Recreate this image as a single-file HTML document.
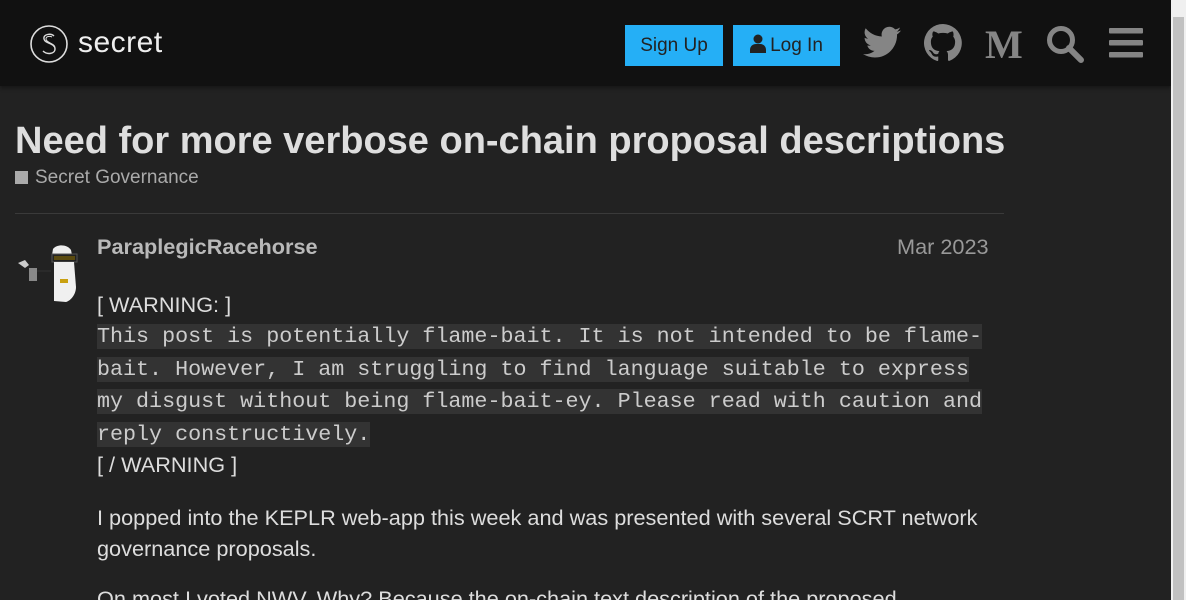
<!DOCTYPE html>
<html><head><meta charset="utf-8"><style>
*{margin:0;padding:0;box-sizing:border-box}
html,body{width:1186px;height:600px;overflow:hidden}
body{background:#222;font-family:"Liberation Sans",sans-serif;color:#ddd;position:relative}
.hdr{position:absolute;left:0;top:0;width:1171px;height:86px;background:#111;box-shadow:0 2px 4px rgba(0,0,0,.4)}
.sb{position:absolute;left:1171px;top:0;width:15px;height:600px;background:#f0f0f0}
.sb .th{position:absolute;left:2px;top:17px;width:11px;height:583px;background:#c1c1c1}
.btn{position:absolute;top:25px;height:41px;background:#25aff6;color:#222;font-size:19px;line-height:41px;text-align:center}
.ic{position:absolute;fill:#858585}
h1{position:absolute;left:15px;top:120px;font-size:38px;font-weight:bold;color:#dedede;white-space:nowrap}
.cat{position:absolute;left:15px;top:167px;font-size:19px;color:#aaa}
.cat i{display:inline-block;width:13px;height:13px;background:#aaa;margin-right:7px;vertical-align:-1px}
.hr{position:absolute;left:15px;top:213px;width:989px;height:1px;background:#3a3a3a}
.un{position:absolute;left:97px;top:234px;font-size:21.7px;font-weight:bold;color:#b9b9b9}
.dt{position:absolute;left:897px;top:234px;font-size:21.7px;color:#999}
.p{position:absolute;left:97px;font-size:21.7px;color:#ddd;line-height:31px;width:900px}
.mono{position:absolute;left:97px;top:321px;width:900px;font-family:"Liberation Mono",monospace;font-size:21.7px;line-height:32.7px;color:#ccc}
.mono span{background:#333}
</style></head><body>
<div class="hdr">
<svg style="position:absolute;left:29px;top:24px" width="40" height="40" viewBox="0 0 40 40"><circle cx="20" cy="20" r="18" fill="none" stroke="#ddd" stroke-width="1.6"/><path d="M25 12c-3-3-11-2-10 3 1 5 11 4 11 10 0 5-8 6-12 2" fill="none" stroke="#ddd" stroke-width="1.4"/><path d="M23 13c-2-1-6-1-6 2 0 4 9 4 9 9" fill="none" stroke="#ddd" stroke-width="1"/></svg>
<div style="position:absolute;left:78px;top:26px;font-size:30px;color:#eee;letter-spacing:0.5px">secret</div>
<div class="btn" style="left:625px;width:98px">Sign Up</div>
<div class="btn" style="left:733px;width:107px"><svg width="16" height="19" viewBox="0 0 16 19" style="vertical-align:-2px;margin-right:4px"><circle cx="8" cy="5" r="4.5" fill="#222"/><path d="M0 19v-3c0-4 3-6 6-6h4c3 0 6 2 6 6v3z" fill="#222"/></svg>Log In</div>
<svg class="ic" style="left:863px;top:26px" width="38" height="33" viewBox="0 0 24 20"><path d="M24 2.4c-.9.4-1.8.6-2.8.8 1-.6 1.8-1.6 2.2-2.7-1 .6-2 1-3.1 1.2A4.9 4.9 0 0 0 11.9 6.2 14 14 0 0 1 1.7 1a4.9 4.9 0 0 0 1.5 6.6c-.8 0-1.6-.3-2.2-.6 0 2.4 1.7 4.4 3.9 4.8-.7.2-1.5.2-2.2.1.6 2 2.4 3.4 4.6 3.4A9.9 9.9 0 0 1 0 17.3 14 14 0 0 0 7.5 19.5c9 0 14-7.5 14-14v-.6c1-.7 1.8-1.6 2.5-2.5z"/></svg>
<svg class="ic" style="left:924px;top:24px" width="38" height="38" viewBox="0 0 16 16"><path d="M8 0a8 8 0 0 0-2.5 15.6c.4 0 .5-.2.5-.4v-1.5c-2.2.5-2.7-1-2.7-1-.4-.9-.9-1.2-.9-1.2-.7-.5.1-.5.1-.5.8.1 1.2.8 1.2.8.7 1.3 1.9.9 2.3.7.1-.5.3-.9.5-1.1-1.8-.2-3.6-.9-3.6-4 0-.9.3-1.6.8-2.1-.1-.2-.4-1 .1-2.1 0 0 .7-.2 2.2.8a7.600 7.600 0 0 1 4 0c1.5-1 2.2-.8 2.2-.8.4 1.100.2 1.900.1 2.100.5.600.8 1.300.8 2.100 0 3.100-1.900 3.800-3.600 4 .3.3.6.8.6 1.500v2.200c0 .2.100.5.600.4A8 8 0 0 0 8 0z"/></svg>
<div style="position:absolute;left:985px;top:21px;font-family:'Liberation Serif',serif;font-weight:bold;font-size:40px;color:#858585">M</div>
<svg class="ic" style="left:1045px;top:24px" width="40" height="40" viewBox="0 0 40 40"><circle cx="16" cy="16" r="11.5" fill="none" stroke="#858585" stroke-width="5"/><path d="M24 24l12 12" stroke="#858585" stroke-width="6" stroke-linecap="round"/></svg>
<svg class="ic" style="left:1109px;top:28px" width="34" height="30"><rect x="0" y="0" width="34" height="5.5" rx="1"/><rect x="0" y="12" width="34" height="5.5" rx="1"/><rect x="0" y="24" width="34" height="5.5" rx="1"/></svg>
</div>
<div class="sb"><div class="th"></div></div>
<h1>Need for more verbose on-chain proposal descriptions</h1>
<div class="cat"><i></i>Secret Governance</div>
<div class="hr"></div>
<svg style="position:absolute;left:15px;top:235px" width="70" height="70" viewBox="0 0 70 70"><path d="M38 14c4-5 14-5 18 1l1 5H37z" fill="#eee"/><rect x="37" y="19" width="25" height="8" fill="#222" stroke="#555"/><rect x="39" y="21" width="21" height="4" fill="#5a4a10"/><path d="M39 27h20l2 25c0 8-6 14-10 15l-12 -1z" fill="#f0f0f0"/><rect x="45" y="44" width="8" height="4" fill="#c9a010"/><path d="M3 28l7-3 4 5-4 3z" fill="#ccc"/><rect x="14" y="33" width="8" height="13" fill="#888"/><path d="M22 36h14" stroke="#333"/></svg>
<div class="un">ParaplegicRacehorse</div>
<div class="dt">Mar 2023</div>
<div class="p" style="top:289px">[ WARNING: ]</div>
<div class="mono"><span>This post is potentially flame-bait. It is not intended to be flame-bait. However, I am struggling to find language suitable to express my disgust without being flame-bait-ey. Please read with caution and reply constructively.</span></div>
<div class="p" style="top:449px">[ / WARNING ]</div>
<div class="p" style="top:502px">I popped into the KEPLR web-app this week and was presented with several SCRT network governance proposals.</div>
<div class="p" style="top:583px">On most I voted NWV. Why? Because the on-chain text description of the proposed</div>
</body></html>
